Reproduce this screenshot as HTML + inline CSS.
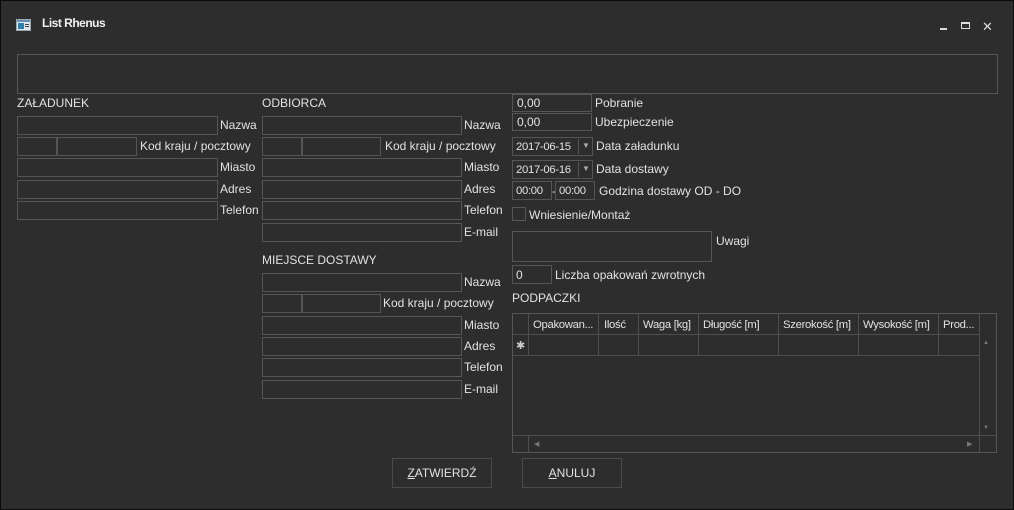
<!DOCTYPE html>
<html><head><meta charset="utf-8"><style>
*{margin:0;padding:0;box-sizing:border-box}
body{width:1014px;height:510px;background:#2d2d2d;position:relative;overflow:hidden;font-family:"Liberation Sans",Arial,sans-serif;font-size:12px;color:#e2e2e2;box-shadow:inset 0 0 0 1px #0a0a0a}
.a{position:absolute;white-space:nowrap}
.b{position:absolute;border:1px solid #555}
.t{position:absolute;white-space:nowrap;line-height:14px}
.d{font-size:11.3px;letter-spacing:-0.3px}
</style></head><body>
<svg class="a" style="left:16px;top:19px" width="15" height="12" viewBox="0 0 15 12"><rect x="0.5" y="0.5" width="14" height="11" fill="#dfe6ee" stroke="#9aa"/><rect x="1" y="1" width="13" height="2" fill="#6a8fb5"/><rect x="2" y="4" width="6" height="6" fill="#2f7fa8"/><rect x="9" y="5" width="4" height="1" fill="#444"/><rect x="9" y="7" width="4" height="1" fill="#444"/></svg>
<div class="t" style="left:42px;top:16px;font-weight:bold;letter-spacing:-0.5px;color:#f0f0f0">List Rhenus</div>
<div class="a" style="left:940px;top:28px;width:7px;height:2px;background:#ddd"></div>
<div class="a" style="left:961px;top:22px;width:9px;height:7px;border:1px solid #ddd;border-top-width:2px"></div>
<div class="t" style="left:982px;top:20px;font-size:13px;color:#ddd">✕</div>

<div class="b" style="left:17px;top:54px;width:981px;height:40px"></div>

<div class="t" style="left:17px;top:96px">ZAŁADUNEK</div>
<div class="b" style="left:17px;top:116px;width:201px;height:19px"></div><div class="t" style="left:220px;top:118px">Nazwa</div>
<div class="b" style="left:17px;top:137px;width:40px;height:19px"></div><div class="b" style="left:57px;top:137px;width:80px;height:19px"></div><div class="t" style="left:140px;top:139px">Kod kraju / pocztowy</div>
<div class="b" style="left:17px;top:158px;width:201px;height:19px"></div><div class="t" style="left:220px;top:160px">Miasto</div>
<div class="b" style="left:17px;top:180px;width:201px;height:19px"></div><div class="t" style="left:220px;top:182px">Adres</div>
<div class="b" style="left:17px;top:201px;width:201px;height:19px"></div><div class="t" style="left:220px;top:203px">Telefon</div>

<div class="t" style="left:262px;top:96px">ODBIORCA</div>
<div class="b" style="left:262px;top:116px;width:200px;height:19px"></div><div class="t" style="left:464px;top:118px">Nazwa</div>
<div class="b" style="left:262px;top:137px;width:40px;height:19px"></div><div class="b" style="left:302px;top:137px;width:79px;height:19px"></div><div class="t" style="left:385px;top:139px">Kod kraju / pocztowy</div>
<div class="b" style="left:262px;top:158px;width:200px;height:19px"></div><div class="t" style="left:464px;top:160px">Miasto</div>
<div class="b" style="left:262px;top:180px;width:200px;height:19px"></div><div class="t" style="left:464px;top:182px">Adres</div>
<div class="b" style="left:262px;top:201px;width:200px;height:19px"></div><div class="t" style="left:464px;top:203px">Telefon</div>
<div class="b" style="left:262px;top:223px;width:200px;height:19px"></div><div class="t" style="left:464px;top:225px">E-mail</div>

<div class="t" style="left:262px;top:253px">MIEJSCE DOSTAWY</div>
<div class="b" style="left:262px;top:273px;width:200px;height:19px"></div><div class="t" style="left:464px;top:275px">Nazwa</div>
<div class="b" style="left:262px;top:294px;width:40px;height:19px"></div><div class="b" style="left:302px;top:294px;width:79px;height:19px"></div><div class="t" style="left:383px;top:296px">Kod kraju / pocztowy</div>
<div class="b" style="left:262px;top:316px;width:200px;height:19px"></div><div class="t" style="left:464px;top:318px">Miasto</div>
<div class="b" style="left:262px;top:337px;width:200px;height:19px"></div><div class="t" style="left:464px;top:339px">Adres</div>
<div class="b" style="left:262px;top:358px;width:200px;height:19px"></div><div class="t" style="left:464px;top:360px">Telefon</div>
<div class="b" style="left:262px;top:380px;width:200px;height:19px"></div><div class="t" style="left:464px;top:382px">E-mail</div>

<div class="b" style="left:512px;top:94px;width:80px;height:18px"></div><div class="t" style="left:517px;top:96px">0,00</div><div class="t" style="left:595px;top:96px">Pobranie</div>
<div class="b" style="left:512px;top:113px;width:80px;height:18px"></div><div class="t" style="left:517px;top:115px">0,00</div><div class="t" style="left:595px;top:115px">Ubezpieczenie</div>
<div class="b" style="left:512px;top:137px;width:81px;height:19px"></div><div class="a" style="left:578px;top:139px;height:15px;border-left:1px solid #555"></div><div class="t d" style="left:516px;top:140px">2017-06-15</div><div class="t" style="left:582px;top:139px;font-size:8px;color:#aaa">▼</div><div class="t" style="left:596px;top:139px">Data załadunku</div>
<div class="b" style="left:512px;top:160px;width:81px;height:19px"></div><div class="a" style="left:578px;top:162px;height:15px;border-left:1px solid #555"></div><div class="t d" style="left:516px;top:163px">2017-06-16</div><div class="t" style="left:582px;top:162px;font-size:8px;color:#aaa">▼</div><div class="t" style="left:596px;top:162px">Data dostawy</div>
<div class="b" style="left:512px;top:181px;width:40px;height:19px"></div><div class="t d" style="left:516px;top:184px">00:00</div><div class="t" style="left:552px;top:184px">-</div>
<div class="b" style="left:555px;top:181px;width:40px;height:19px"></div><div class="t d" style="left:559px;top:184px">00:00</div><div class="t" style="left:599px;top:184px">Godzina dostawy OD - DO</div>
<div class="b" style="left:512px;top:207px;width:14px;height:14px"></div><div class="t" style="left:529px;top:208px">Wniesienie/Montaż</div>
<div class="b" style="left:512px;top:231px;width:200px;height:31px"></div><div class="t" style="left:716px;top:234px">Uwagi</div>
<div class="b" style="left:512px;top:265px;width:40px;height:19px"></div><div class="t" style="left:516px;top:268px">0</div><div class="t" style="left:555px;top:268px">Liczba opakowań zwrotnych</div>
<div class="t" style="left:512px;top:291px">PODPACZKI</div>

<div class="b" style="left:512px;top:313px;width:485px;height:140px;overflow:hidden">
 <div class="a" style="left:0;top:20px;width:466px;border-top:1px solid #4e4e4e"></div>
 <div class="a" style="left:0;top:41px;width:466px;border-top:1px solid #4e4e4e"></div>
 <div class="a" style="left:0;top:121px;width:483px;border-top:1px solid #4e4e4e"></div>
 <div class="a" style="left:15px;top:0;height:41px;border-left:1px solid #4e4e4e"></div>
 <div class="a" style="left:15px;top:121px;height:18px;border-left:1px solid #4e4e4e"></div>
 <div class="a" style="left:85px;top:0;height:41px;border-left:1px solid #4e4e4e"></div>
 <div class="a" style="left:125px;top:0;height:41px;border-left:1px solid #4e4e4e"></div>
 <div class="a" style="left:185px;top:0;height:41px;border-left:1px solid #4e4e4e"></div>
 <div class="a" style="left:265px;top:0;height:41px;border-left:1px solid #4e4e4e"></div>
 <div class="a" style="left:345px;top:0;height:41px;border-left:1px solid #4e4e4e"></div>
 <div class="a" style="left:425px;top:0;height:41px;border-left:1px solid #4e4e4e"></div>
 <div class="a" style="left:466px;top:0;height:139px;border-left:1px solid #4e4e4e"></div>
 <div class="t d" style="left:20px;top:4px">Opakowan...</div>
 <div class="t d" style="left:91px;top:4px">Ilość</div>
 <div class="t d" style="left:130px;top:4px">Waga [kg]</div>
 <div class="t d" style="left:190px;top:4px">Długość [m]</div>
 <div class="t d" style="left:270px;top:4px">Szerokość [m]</div>
 <div class="t d" style="left:350px;top:4px">Wysokość [m]</div>
 <div class="t d" style="left:430px;top:4px">Prod...</div>
 <div class="t" style="left:3px;top:25px;font-size:11px;color:#ccc">✱</div>
 <div class="t" style="left:470px;top:22px;font-size:6px;color:#777">▲</div>
 <div class="t" style="left:470px;top:107px;font-size:6px;color:#777">▼</div>
 <div class="t" style="left:21px;top:124px;font-size:7px;color:#777">◀</div>
 <div class="t" style="left:454px;top:124px;font-size:7px;color:#777">▶</div>
</div>

<div class="b" style="left:392px;top:458px;width:100px;height:30px;border-color:#4a4a4a"></div><div class="t" style="left:392px;top:466px;width:100px;text-align:center"><u>Z</u>ATWIERDŹ</div>
<div class="b" style="left:522px;top:458px;width:100px;height:30px;border-color:#4a4a4a"></div><div class="t" style="left:522px;top:466px;width:100px;text-align:center"><u>A</u>NULUJ</div>
</body></html>
